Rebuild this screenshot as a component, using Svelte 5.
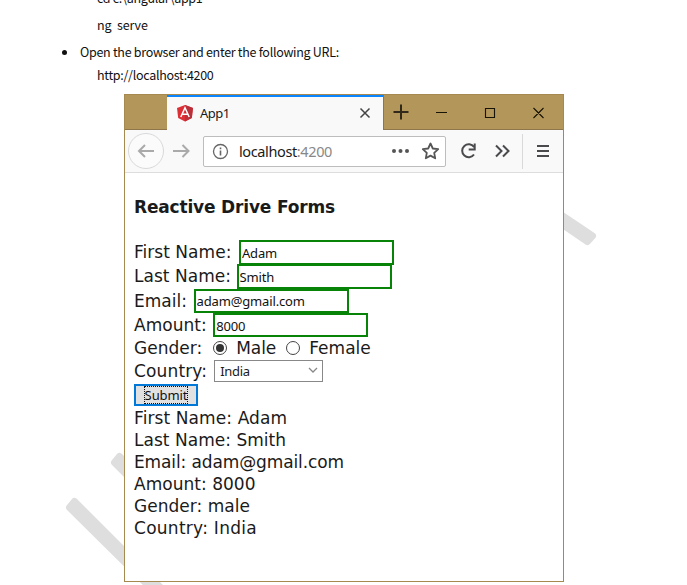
<script>
  const inputs = [
    { label: 'First Name:', value: 'Adam', gap: 7.5 },
    { label: 'Last Name:', value: 'Smith', gap: 5.5 },
    { label: 'Email:', value: 'adam@gmail.com', gap: 6.5 },
    { label: 'Amount:', value: '8000', gap: 6.5 }
  ];
  const results = [
    { text: 'First Name: Adam', spacing: 0.1 },
    { text: 'Last Name: Smith', spacing: 0.03 },
    { text: 'Email: adam@gmail.com', spacing: -0.12 },
    { text: 'Amount: 8000', spacing: 0.03 },
    { text: 'Gender: male', spacing: 0.03 },
    { text: 'Country: India', spacing: 0.27 }
  ];
</script>

<main>
  <svg class="mark" width="687" height="585" viewBox="0 0 687 585">
    <g stroke="#dedede" stroke-width="7" stroke-linejoin="round" fill="#dedede">
      <path d="M556 211.500 592.500 236 587.500 241.500 556 220Z" />
      <path d="M74.500 501.500 174 601 164 601 69.500 507.500Z" />
      <path d="M119.500 456.500 140 477 134 482 114.500 462.500Z" />
    </g>
  </svg>
  <section class="doc">
    <p class="l1">cd c:\angular\app1</p>
    <p class="l2">ng&nbsp; serve</p>
    <p class="l3"><i></i>Open the browser and enter the following URL:</p>
    <p class="l4">http://localhost:4200</p>
  </section>
  <section class="window">
    <header>
      <div class="tab">
        <svg width="18" height="18" viewBox="0 0 18 18"><path d="M9 1 17 4 15.8 14 9 17.5 2.200 14 1 4Z" fill="#dd3036" /><path d="M9 1 17 4 15.800 14 9 17.500Z" fill="#b9303a" /><path d="M4.800 13 9 3.800 13.200 13M6.500 10.300h5" fill="none" stroke="#fff" stroke-width="1.500" /></svg>
        <span>App1</span>
        <svg class="x" width="12" height="12" viewBox="0 0 12 12"><path d="M1.500 1.500l9 9M10.500 1.500l-9 9" stroke="#444" stroke-width="1.500" /></svg>
      </div>
      <svg class="controls" width="178" height="34" viewBox="0 0 178 34" fill="none" stroke="#171307">
        <path d="M16 9.500v15M8.500 17h15" stroke="#30291a" stroke-width="2" />
        <path d="M51 17.500h11M100.500 13.500h9v9h-9zM148.500 13l10 10M158.500 13l-10 10" stroke-width="1.100" />
      </svg>
    </header>
    <nav>
      <svg class="arrows" width="78" height="42" viewBox="0 0 78 42" fill="none">
        <circle cx="21" cy="21" r="17.500" fill="#fbfbfb" stroke="#d9d9d9" />
        <path d="M29 21H14M20 15 14 21l6 6M48 21h15M57.500 15 63.500 21l-6 6" stroke="#aaa" stroke-width="2" />
      </svg>
      <div class="address">
        <svg width="17" height="17" viewBox="0 0 17 17" fill="none" stroke="#666"><circle cx="8.500" cy="8.500" r="7" stroke-width="1.300" /><path d="M8.500 7.500v5M8.500 4.500v1.700" stroke-width="1.600" /></svg>
        <span>localhost<b>:4200</b></span>
        <svg class="star" width="50" height="20" viewBox="0 0 50 20"><g fill="#555"><circle cx="3" cy="10" r="2" /><circle cx="9.500" cy="10" r="2" /><circle cx="16" cy="10" r="2" /></g><path d="m39.500 2.500 2.300 5 5.400.7-4 3.700 1 5.400-4.700-2.700-4.700 2.700 1-5.400-4-3.700 5.400-.7Z" fill="none" stroke="#555" stroke-width="1.800" stroke-linejoin="round" /></svg>
      </div>
      <svg class="tools" width="116" height="42" viewBox="0 0 116 42" fill="none" stroke="#4a4a4c" stroke-width="2">
        <path d="M28 24.500a6.500 6.500 0 1 1 0-7.500M28.700 13.500v6h-6" />
        <path d="M50 15.500l5.500 5.500-5.500 5.500M57 15.500l5.500 5.500-5.500 5.500M91 16h12M91 21h12M91 26h12" />
        <path d="M76.500 4v35" stroke="#d9d9d9" stroke-width="1" />
      </svg>
    </nav>
    <div class="page">
      <h1>Reactive Drive Forms</h1>
      {#each inputs as field}
        <label class="row" style:gap={`${field.gap}px`}><span>{field.label}</span><input value={field.value} /></label>
      {/each}
      <div class="gender"><span>Gender:</span><i class="radio on"></i><span class="male">Male</span><i class="radio"></i><span>Female</span></div>
      <div class="country"><span>Country:</span><div class="select">India<svg width="10" height="7" viewBox="0 0 10 7"><path d="M1 1l4 4 4-4" fill="none" stroke="#888" stroke-width="1.300" /></svg></div></div>
      <button><span>Submit</span></button>
      {#each results as line}<p style:letter-spacing={`${line.spacing}px`}>{line.text}</p>{/each}
    </div>
  </section>
</main>

<style>
  :global(body) { background: #fff; overflow: hidden; }
  * { box-sizing: border-box; }
  main { position: relative; width: 687px; height: 585px; overflow: hidden; color: #1a1a1a; background: #fff; }
  .mark { position: absolute; inset: 0; }
  p, h1 { margin: 0; white-space: pre; }
  .doc { height: 94px; display: flow-root; font: 12.500px/20px "Noto Sans CJK SC", "Noto Sans", sans-serif; color: #111; }
  .doc p { margin-left: 97px; height: 20px; letter-spacing: -.29px; }
  .doc .l1 { margin-top: -12px; }
  .doc .l2 { margin-top: 7px; letter-spacing: -.1px; }
  .doc .l3 { margin: 7px 0 0 62px; display: flex; align-items: center; }
  .l3 i { width: 5px; height: 5px; border-radius: 50%; background: #111; margin-right: 13px; }
  .doc .l4 { margin-top: 3px; }
  .window { position: relative; width: 440px; height: 488px; margin-left: 124px; border: 1px solid #a5894f; background: #fff; }
  header { height: 35px; background: #b3965a; display: flex; padding-left: 42px; border-bottom: 1px solid #8e764a; }
  .tab { width: 217px; height: 35px; background: #f9f9fa; border-top: 2px solid #0a84ff; border-right: 1px solid #8e764a; display: flex; align-items: center; padding: 0 0 2px 9px; font: 13px "Noto Sans", sans-serif; flex: none; }
  .tab span { margin-left: 6px; letter-spacing: -.5px; }
  .tab .x { margin-left: auto; margin-right: 12px; }
  .controls { margin-left: 1px; }
  nav { height: 43px; background: #f9f9fa; border-bottom: 1px solid #ddd; display: flex; align-items: center; }
  .address { width: 243px; height: 31px; border: 1px solid #bdbdbd; border-radius: 2px; background: #fff; display: flex; align-items: center; padding-left: 8px; font: 14.500px "Noto Sans", sans-serif; }
  .address span { margin-left: 10px; letter-spacing: -.38px; }
  .address b { font-weight: 400; color: #888; }
  .star { margin-left: auto; margin-right: 4px; }
  .page { padding: 19.500px 0 0 9px; font: 17px/22px "DejaVu Sans", sans-serif; letter-spacing: .03px; }
  h1 { font-size: 17px; line-height: 28px; margin-bottom: 19.500px; letter-spacing: -.17px; }
  .row { display: flex; height: 24.250px; line-height: 24px; }
  input { margin: 0; width: 155px; height: 24.500px; border: 2px solid #078307; padding: 1px 1px 0; font: 13px "Noto Sans", sans-serif; letter-spacing: -.15px; color: #111; background: #fff; outline: 0; }
  .gender, .country { display: flex; align-items: center; height: 22.500px; }
  .radio { width: 14px; height: 14px; border: 1px solid #444; border-radius: 50%; margin: 0 9px 0 11px; display: flex; align-items: center; justify-content: center; }
  .on::after { content: ""; width: 8px; height: 8px; border-radius: 50%; background: #333; }
  .male { margin-right: -1px; letter-spacing: -.1px; }
  .country > span { letter-spacing: .15px; }
  .select { margin-left: 7px; width: 109px; height: 22px; border: 1px solid #888; display: flex; align-items: center; justify-content: space-between; padding: 0 4px 0 5px; font: 13px "Noto Sans", sans-serif; letter-spacing: -.3px; }
  button { display: block; width: 64px; height: 22px; margin: 2px 0 1px; padding: 0; border: 2px solid #0078d7; background: #e1e1e1; font: 13px/17px "Noto Sans", sans-serif; letter-spacing: -.1px; color: #111; }
  button span { display: inline-block; outline: 1px dotted #111; outline-offset: 0; height: 16px; }
  p { height: 22px; }
</style>
